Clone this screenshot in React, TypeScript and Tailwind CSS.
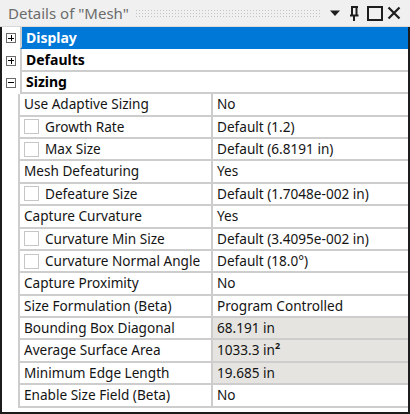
import React from 'react';

type Row = {
  label: string;
  value: React.ReactNode;
  check?: boolean;
  readOnly?: boolean;
};

const rows: Row[] = [
  { label: 'Use Adaptive Sizing', value: 'No' },
  { label: 'Growth Rate', value: 'Default (1.2)', check: true },
  { label: 'Max Size', value: 'Default (6.8191 in)', check: true },
  { label: 'Mesh Defeaturing', value: 'Yes' },
  { label: 'Defeature Size', value: 'Default (1.7048e-002 in)', check: true },
  { label: 'Capture Curvature', value: 'Yes' },
  { label: 'Curvature Min Size', value: 'Default (3.4095e-002 in)', check: true },
  { label: 'Curvature Normal Angle', value: 'Default (18.0°)', check: true },
  { label: 'Capture Proximity', value: 'No' },
  { label: 'Size Formulation (Beta)', value: 'Program Controlled' },
  { label: 'Bounding Box Diagonal', value: '68.191 in', readOnly: true },
  {
    label: 'Average Surface Area',
    value: (
      <>
        1033.3 in<sup className="text-[9px] font-bold">2</sup>
      </>
    ),
    readOnly: true,
  },
  { label: 'Minimum Edge Length', value: '19.685 in', readOnly: true },
  { label: 'Enable Size Field (Beta)', value: 'No' },
];

function Toggle({ open }: { open: boolean }) {
  return (
    <div className="w-[18px] shrink-0 flex items-center justify-center">
      <div className="relative w-[10px] h-[10px] border border-[#6a6a6a] bg-white">
        <div className="absolute left-[1px] right-[1px] top-[3.5px] h-px bg-black" />
        {!open && <div className="absolute top-[1px] bottom-[1px] left-[3.5px] w-px bg-black" />}
      </div>
    </div>
  );
}

function Group({ title, open, selected }: { title: string; open: boolean; selected?: boolean }) {
  return (
    <div className="flex h-[22.4px]">
      <Toggle open={open} />
      <div
        className={
          'flex-1 flex items-center pl-[4px] font-bold text-[14px] border-l-2 border-b-2 border-[#cdcdcd] ' +
          (selected ? 'bg-[#0078d7] text-white border-b-[#0078d7]' : 'bg-white text-black')
        }
      >
        {title}
      </div>
    </div>
  );
}

export default function App() {
  return (
    <div className="w-[410px] h-[414px] bg-white text-[13.6px] text-[#141414] font-['Noto_Sans',sans-serif] overflow-hidden flex flex-col">
      {/* title bar */}
      <div className="h-[27px] shrink-0 bg-[#f0f0f0] border-b border-[#d9d9d9] flex items-center pl-[8px] pr-[9px]">
        <span className="text-[15px] text-[#6b6b6b] whitespace-nowrap">Details of "Mesh"</span>
        <div className="flex-1 h-[8px] ml-[6px] mr-[8px] bg-[radial-gradient(#c4c4c4_0.8px,transparent_0.9px)] bg-[length:3px_3px]" />
        <div className="flex items-center">
          <svg width="10" height="7" viewBox="0 0 10 7" className="mr-[9px]">
            <path d="M0 0.5 H10 L5 6 Z" fill="#1e1e1e" />
          </svg>
          <svg width="10" height="15" viewBox="0 0 10 15" className="mr-[8px]">
            <path d="M2 1 H9 M3 1 V9 M7.5 1 V9 M1 9.5 H9.5 M5 10 V15" stroke="#1e1e1e" strokeWidth="2" fill="none" />
          </svg>
          <svg width="16" height="15" viewBox="0 0 16 15" className="mr-[4px]">
            <rect x="1" y="1" width="14" height="13" stroke="#1e1e1e" strokeWidth="2" fill="none" />
          </svg>
          <svg width="14" height="14" viewBox="0 0 14 14">
            <path d="M1.5 1.5 L12.5 12.5 M12.5 1.5 L1.5 12.5" stroke="#1e1e1e" strokeWidth="2.2" fill="none" />
          </svg>
        </div>
      </div>

      {/* property grid */}
      <div className="flex-1 flex flex-col border-l-2 border-r-2 border-b-2 border-[#1c1c1c]">
        <Group title="Display" open={false} selected />
        <Group title="Defaults" open={false} />
        <Group title="Sizing" open />
        {rows.map((r) => (
          <div key={r.label} className="flex h-[22.4px]">
            <div className="w-[16px] shrink-0" />
            <div className="flex-1 flex border-l-2 border-b-2 border-[#cdcdcd]">
              <div className="w-[193px] shrink-0 flex items-center pl-[4px] border-r-2 border-[#cdcdcd] whitespace-nowrap">
                {r.check && (
                  <div className="w-[15px] h-[15px] border border-[#c6c6c6] bg-white mr-[6px] shrink-0" />
                )}
                {r.label}
              </div>
              <div
                className={
                  'flex-1 flex items-center pl-[4px] whitespace-nowrap ' + (r.readOnly ? 'bg-[#e5e4e0]' : 'bg-white')
                }
              >
                {r.value}
              </div>
            </div>
          </div>
        ))}
      </div>
    </div>
  );
}
